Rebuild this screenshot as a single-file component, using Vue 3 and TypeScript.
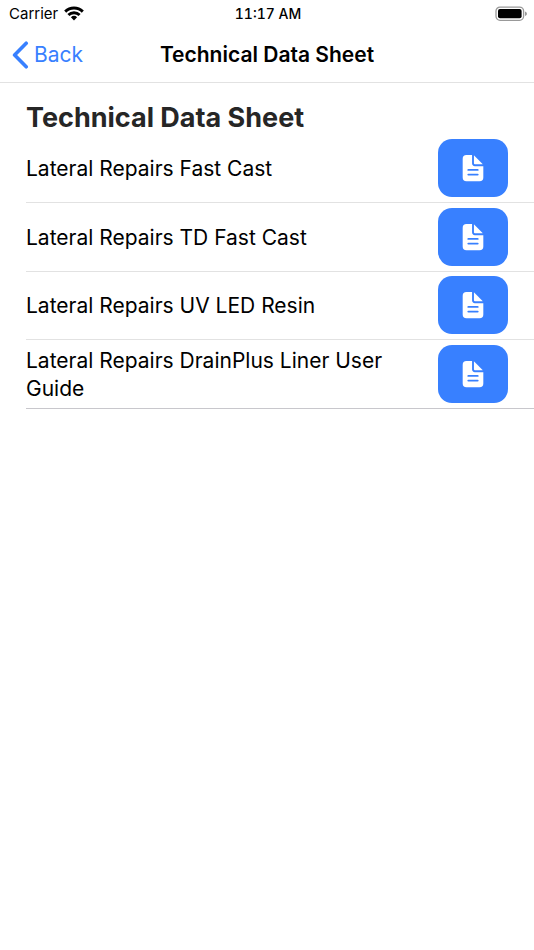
<script setup lang="ts">
interface Sheet {
  id: number
  name: string
}

const title = 'Technical Data Sheet'

const sheets: Sheet[] = [
  { id: 1, name: 'Lateral Repairs Fast Cast' },
  { id: 2, name: 'Lateral Repairs TD Fast Cast' },
  { id: 3, name: 'Lateral Repairs UV LED Resin' },
  { id: 4, name: 'Lateral Repairs DrainPlus Liner User Guide' },
]
</script>

<template>
  <div class="page">
    <div class="status">
      <div class="carrier">
        <span>Carrier</span>
        <svg class="wifi" viewBox="0 0 20 15" aria-hidden="true">
          <g fill="none" stroke="#000" stroke-width="2.9">
            <path d="M1.2 5.6a12.6 12.6 0 0 1 17.6 0" />
            <path d="M4.4 9.1a7.9 7.9 0 0 1 11.2 0" />
          </g>
          <path d="M10 14.4l-3.1-3.1a4.5 4.5 0 0 1 6.2 0z" />
        </svg>
      </div>
      <time class="clock">11:17 AM</time>
      <svg class="battery" viewBox="0 0 32 16" aria-hidden="true">
        <rect x="1" y="1.1" width="27.6" height="13.2" rx="4" fill="none" stroke="#999" stroke-width="1.3" />
        <rect x="3" y="3.1" width="23.6" height="9.2" rx="2" />
        <path d="M30 5.4c1.4.5 1.9 1.3 1.9 2.3s-.5 1.8-1.9 2.3z" fill="#999" />
      </svg>
    </div>

    <header class="toolbar">
      <button class="back" type="button">
        <svg class="chevron" viewBox="0 0 17 28" aria-hidden="true">
          <path d="M14.2 2.2L2.6 14l11.6 11.8" fill="none" stroke="#3880ff" stroke-width="3.6" stroke-linecap="round" stroke-linejoin="round" />
        </svg>
        <span>Back</span>
      </button>
      <div class="toolbar-title">{{ title }}</div>
    </header>

    <main>
      <h1 class="heading">{{ title }}</h1>
      <ul class="list">
        <li v-for="sheet in sheets" :key="sheet.id" class="item">
          <span class="name">{{ sheet.name }}</span>
          <button class="open" type="button" :aria-label="sheet.name">
            <svg class="doc" viewBox="0 0 512 512" aria-hidden="true">
              <path d="M428 224H288a48 48 0 01-48-48V36a4 4 0 00-4-4h-92a64 64 0 00-64 64v320a64 64 0 0064 64h224a64 64 0 0064-64V228a4 4 0 00-4-4zm-92 160H176a16 16 0 010-32h160a16 16 0 010 32zm0-80H176a16 16 0 010-32h160a16 16 0 010 32z" />
              <path d="M419.22 188.59L275.41 44.78a2 2 0 00-3.41 1.41V176a16 16 0 0016 16h129.81a2 2 0 001.41-3.41z" />
            </svg>
          </button>
        </li>
      </ul>
    </main>
  </div>
</template>

<style>
body {
  background: #fff;
}
</style>

<style scoped>
.page {
  min-height: 100vh;
  background: #fff;
  color: #000;
  font-family: Inter, "Liberation Sans", sans-serif;
}

.status {
  display: grid;
  grid-template-columns: 1fr auto 1fr;
  align-items: center;
  height: 27px;
  padding: 0 7px 0 9px;
  font-size: 15px;
  line-height: 27px;
}

.carrier {
  display: flex;
  align-items: center;
  gap: 6px;
}

.wifi {
  width: 20px;
  height: 15px;
}

.clock {
  font-size: 14px;
  font-weight: 500;
  font-variant-numeric: tabular-nums;
}

.battery {
  justify-self: end;
  width: 32px;
  height: 16px;
}

.toolbar {
  display: grid;
  grid-template-columns: 1fr auto 1fr;
  align-items: center;
  height: 55px;
  padding: 0 12px;
  border-bottom: 1px solid #e2e2e2;
}

.back {
  display: flex;
  align-items: center;
  justify-self: start;
  gap: 5px;
  padding: 0;
  border: 0;
  background: none;
  color: #3880ff;
  font: inherit;
  font-size: 21px;
  line-height: 28px;
}

.chevron {
  width: 17px;
  height: 28px;
}

.toolbar-title {
  font-size: 21px;
  font-weight: 600;
  line-height: 28px;
}

.heading {
  margin: 0;
  padding: 18px 26px 0;
  color: #262626;
  font-size: 27px;
  font-weight: 700;
  line-height: 33px;
}

.list {
  display: grid;
  grid-auto-rows: 1fr;
  min-height: 275px;
  margin: 0 0 0 26px;
  padding: 0;
  list-style: none;
}

.item {
  display: flex;
  align-items: center;
  gap: 16px;
  padding-right: 26px;
  border-bottom: 1px solid #e2e2e2;
}

.item:last-child {
  border-bottom-color: #c8c7cc;
}

.name {
  flex: 1;
  padding-top: 2px;
  font-size: 21px;
  line-height: 28px;
}

.open {
  display: flex;
  align-items: center;
  justify-content: center;
  width: 70px;
  height: 58px;
  padding: 0;
  border: 0;
  border-radius: 14px;
  background: #3880ff;
}

.doc {
  width: 30px;
  height: 30px;
  fill: #fff;
}
</style>
